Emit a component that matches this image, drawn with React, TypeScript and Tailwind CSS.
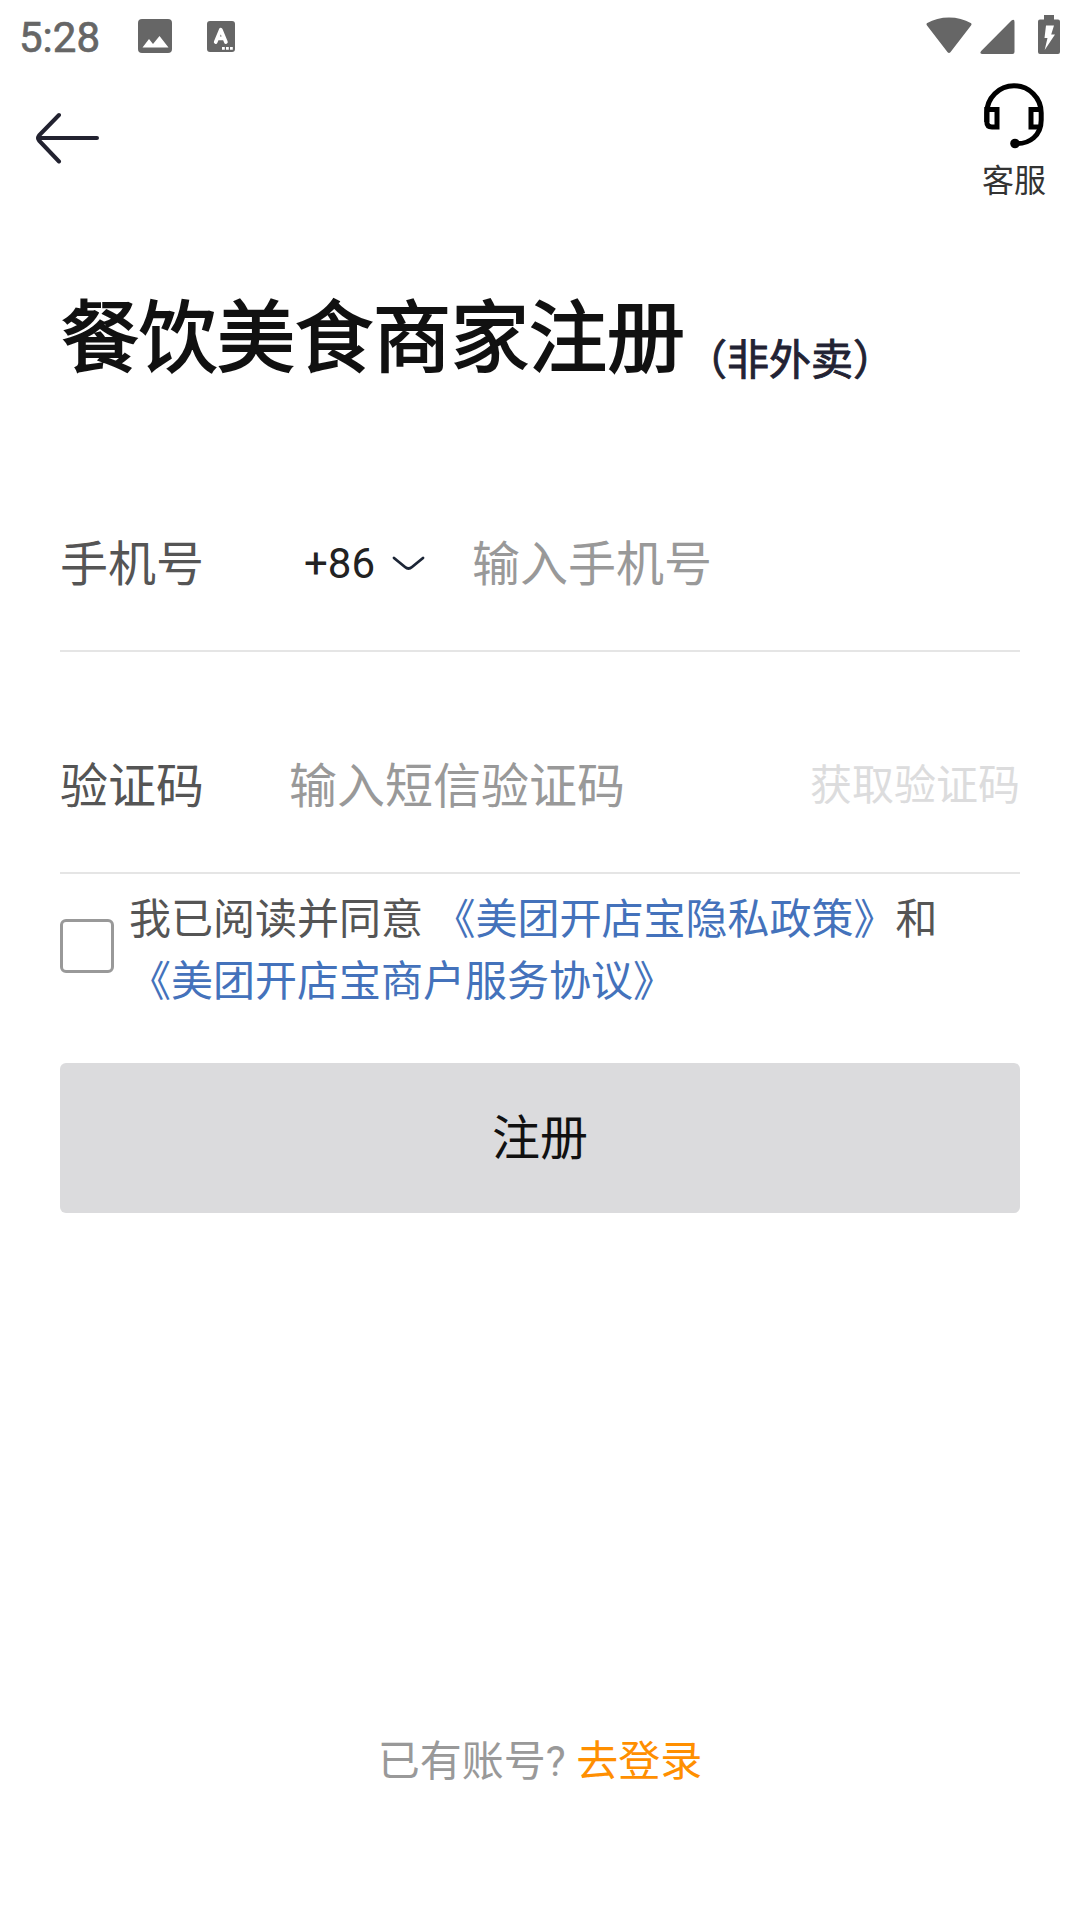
import React from "react";

function StatusBar() {
  return (
    <div className="flex h-[72px] items-center justify-between pl-[19px] pr-5 text-[#666666]">
      <div className="flex items-center">
        <span className="w-[119px] pt-[3px] text-[42px] leading-[72px] [-webkit-text-stroke:0.7px_#666666]">5:28</span>
        <svg className="h-[34px] w-[34px]" viewBox="0 0 34 34">
          <rect width="34" height="34" rx="4" fill="currentColor" />
          <path d="M4.5 28.5 L11 20 L15 25 L21.5 17 L30.5 28.5 Z" fill="#fff" />
        </svg>
        <svg className="ml-[35px] h-[31px] w-[28px]" viewBox="0 0 28 31">
          <rect width="28" height="31" rx="3" fill="currentColor" />
          <path d="M8.7 21 L13.8 8.6 L18.9 21 M10.5 17.3 H17" fill="none" stroke="#fff" strokeWidth="3.7" strokeLinecap="round" strokeLinejoin="round" />
          <path d="M15 26h2.8v2.8H15z M19 26h2.8v2.8H19z M23 26h2.8v2.8H23z" fill="#fff" />
        </svg>
      </div>
      <div className="flex items-center pb-[3px]">
        <svg className="mt-[2px] h-[40px] w-[46px]" viewBox="0 0 46 40">
          <path d="M1 9.5 Q-0.2 8 1.3 7 C13 -0.5 33 -0.5 44.7 7 Q46.2 8 45 9.5 L24.4 36.2 Q23 37.8 21.6 36.2 Z" fill="currentColor" />
        </svg>
        <svg className="ml-[8px] mt-[3px] h-[36px] w-[35px]" viewBox="0 0 35 36">
          <path d="M31.5 2.5 Q34.5 0.5 34.5 4 V34 Q34.5 36 32.5 36 H2 Q-0.8 35.5 1.2 33 Z" fill="currentColor" />
        </svg>
        <svg className="ml-[23px] h-[39px] w-[22px]" viewBox="0 0 22 39">
          <path d="M6 0h10v4.5h4q2 0 2 2V37q0 2-2 2H2q-2 0-2-2V6.5q0-2 2-2h4z" fill="currentColor" />
          <path d="M8 10.5h8L13.2 19.5H17L6.7 35L9.5 23H6.5z" fill="#fff" />
        </svg>
      </div>
    </div>
  );
}

function Header() {
  return (
    <div className="flex h-[140px] items-start justify-between pl-[34px] pr-[33px]">
      <svg className="mt-[40px] h-[52px] w-[66px]" viewBox="0 0 66 52">
        <path d="M25 3 L5 23.5 Q3 26 5 28.5 L25 49.5 M4 26 H63" fill="none" stroke="#222230" strokeWidth="4" strokeLinecap="round" strokeLinejoin="round" />
      </svg>
      <div className="flex w-[66px] flex-col items-center pt-[10px]">
        <svg className="h-[68px] w-[64px]" viewBox="0 0 64 68">
          <g fill="none" stroke="#000" strokeWidth="5">
            <path d="M4.8 40 V31 A27.2 27.2 0 0 1 59.2 31 V38 C59.2 53 48 62.5 33 61.5" />
            <path d="M4.8 27.5 H15 V45 H10 Q4.8 45 4.8 39.5 Z" />
            <path d="M59 27.5 H49 V45 H57.5" />
          </g>
          <circle cx="33" cy="61.5" r="4.8" fill="#000" />
        </svg>
        <span className="mt-[11px] text-[32px] leading-[40px] text-[#333333]">客服</span>
      </div>
    </div>
  );
}

function Title() {
  return (
    <div className="flex h-[216px] items-start pl-[61px] pt-[71px]">
      <h1 className="text-[78px] leading-[114px] text-[#111111] [-webkit-text-stroke:1.9px_#111111]">餐饮美食商家注册</h1>
      <span className="pt-[48px] text-[42px] leading-[60px] text-[#222233] [-webkit-text-stroke:0.9px_#222233]">（非外卖）</span>
    </div>
  );
}

function Agreement() {
  return (
    <div className="flex h-[189px] items-start px-[60px] pt-[15px]">
      <div className="mt-[30px] h-[54px] w-[54px] shrink-0 rounded-[6px] border-[3px] border-[#999999]" />
      <p className="ml-[15px] text-[42px] leading-[62px] text-[#555555]">
        我已阅读并同意 <span className="text-[#4472bb]">《美团开店宝隐私政策》</span>和
        <br />
        <span className="text-[#4472bb]">《美团开店宝商户服务协议》</span>
      </p>
    </div>
  );
}

export default function App() {
  return (
    <div className="flex h-[1920px] w-[1080px] flex-col overflow-hidden bg-white font-[Roboto,'Noto_Sans_CJK_SC',sans-serif]">
      <StatusBar />
      <Header />
      <Title />

      <div className="mx-[60px] flex h-[224px] items-center border-b-2 border-[#e5e5e5] pt-[52px] text-[48px] leading-[70px]">
        <span className="w-[244px] text-[#555555]">手机号</span>
        <div className="flex items-center pb-[2px]">
          <span className="text-[42px] text-[#222222]">+86</span>
          <svg className="ml-[17px] h-[16px] w-[34px]" viewBox="0 0 34 16">
            <path d="M2 2 L13 11 Q16.5 14 20 11 L31 2" fill="none" stroke="#1c2536" strokeWidth="2.8" strokeLinecap="round" />
          </svg>
        </div>
        <span className="ml-[46px] text-[#999999]">输入手机号</span>
      </div>

      <div className="mx-[60px] flex h-[222px] items-center border-b-2 border-[#e5e5e5] pt-[50px] text-[48px] leading-[70px]">
        <span className="w-[229px] text-[#555555]">验证码</span>
        <span className="flex-1 text-[#999999]">输入短信验证码</span>
        <span className="pb-[2px] text-[42px] text-[#dcdcdd]">获取验证码</span>
      </div>

      <Agreement />

      <button className="mx-[60px] h-[150px] shrink-0 rounded-[6px] bg-[#dbdbdd] pt-[2px] text-[48px] text-[#111111]">注册</button>

      <p className="mt-auto pb-[127px] text-center text-[42px] leading-[62px] text-[#999999]">
        已有账号? <span className="text-[#ff8f00]">去登录</span>
      </p>
    </div>
  );
}
